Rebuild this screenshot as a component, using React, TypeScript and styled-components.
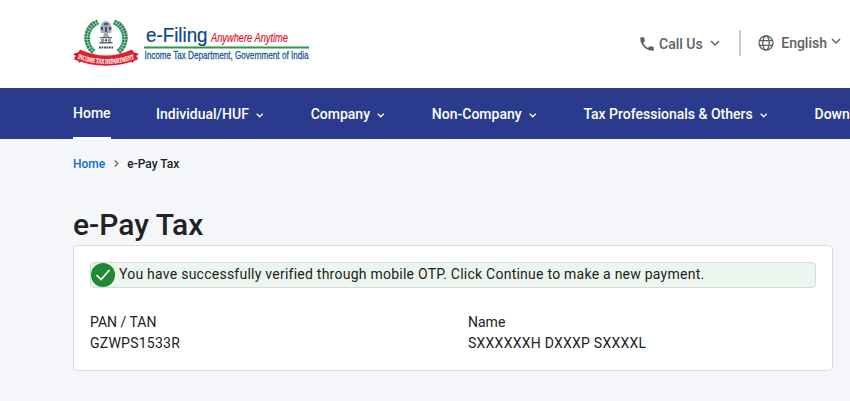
import React, {FC} from 'react'
import styled, { createGlobalStyle } from 'styled-components'

const menuItems = [
    'Individual/HUF',
    'Company',
    'Non-Company',
    'Tax Professionals & Others',
    'Downloads',
]

const Chevron:FC<{width: number, stroke: number}> = ({width, stroke}) => (
    <svg width={width} height={width * 0.6} viewBox="0 0 10 6" fill="none" stroke="currentColor" strokeWidth={stroke}>
        <path d="M1 1l4 4 4-4" />
    </svg>
)

const laurel = 'M25 4a17.500 17.500 0 0 0-4 30M41 4a17.500 17.500 0 0 1 4 30'

const Emblem:FC = () => (
    <svg width="66" height="50" viewBox="0 0 66 50">
        <path d="M20 3.500C9 11 9 28 20 36" fill="none" stroke="#e8505a" strokeWidth="1" />
        <path d="M46 3.500C57 11 57 28 46 36" fill="none" stroke="#e8505a" strokeWidth="1" />
        <path d={laurel} fill="none" stroke="#8fcdb0" strokeWidth="5" />
        <path d={laurel} fill="none" stroke="#188353" strokeWidth="5" strokeDasharray="1.900 .9" />
        <path d={laurel} fill="none" stroke="#c6e6d6" strokeWidth=".6" />
        <g fill="#5a6674">
            <path d="M29 5q4-4 8 0l2 5-1 5h-3l1 4h-6l1-4h-3l-1-5z" fill="#a3aab5" />
            <path d="M31 5h4v2h-4zM28 9h2v3h-2zM36 9h2v3h-2zM32 9h2v5h-2z" fill="#46536a" />
            <path d="M27 19h12v1.200H27zM26.500 24h13v1.400h-13z" />
            <path d="M28 20.500h3v3.500h-3zM35 20.500h3v3.500h-3z" fill="#929ba6" />
            <circle cx="33" cy="22.300" r="1.300" />
        </g>
        <path d="M26 29.500h14" stroke="#444" strokeWidth="1.800" strokeDasharray="1.800 .7" />
        <path d="M0 36l10-3 3 6-7 6-1-4-4-1 2-2zM66 36l-10-3-3 6 7 6 1-4 4-1-2-2z" fill="#b3141f" />
        <path d="M7 31.500Q33 43.500 59 31.500L65 41.500Q33 54 1 41.500Z" fill="#e21f2b" />
        <path id="ribbon" d="M4.500 40.500Q33 51 62 40.500" fill="none" />
        <text fontFamily="'Liberation Serif', serif" fontSize="7" fontWeight="700" fill="#fff" stroke="#fff" strokeWidth=".2">
            <textPath href="#ribbon" textLength="58" lengthAdjust="spacingAndGlyphs">INCOME TAX DEPARTMENT</textPath>
        </text>
    </svg>
)

const Wordmark:FC = () => (
    <svg width="168" height="42" viewBox="0 0 168 42" fontFamily="'Liberation Sans', sans-serif">
        <text x="3" y="19" fontSize="20" fill="#0d4583" stroke="#0d4583" strokeWidth=".2" textLength="61.500" lengthAdjust="spacingAndGlyphs">e-Filing</text>
        <text x="68" y="18.500" fontSize="12" fontStyle="italic" fill="#e30b2c" stroke="#e30b2c" strokeWidth=".15" textLength="77" lengthAdjust="spacingAndGlyphs">Anywhere Anytime</text>
        <path d="M1 24.500h165" stroke="#2c9a3f" strokeWidth="1.800" />
        <text x="1.500" y="36" fontSize="11" fill="#1d5b92" stroke="#1d5b92" strokeWidth=".3" textLength="164" lengthAdjust="spacingAndGlyphs">Income Tax Department, Government of India</text>
    </svg>
)

const App:FC = () => {
  return (
    <>
        <GlobalStyle />
        <TopBar>
            <Logo>
                <Emblem />
                <Wordmark />
            </Logo>
            <Tools>
                <Tool>
                    <svg width="18" height="18" viewBox="0 0 24 24" fill="currentColor">
                        <path d="M6.620 10.790a15.150 15.150 0 0 0 6.590 6.590l2.200-2.200a1 1 0 0 1 1.020-.24 11.400 11.400 0 0 0 3.570.57 1 1 0 0 1 1 1V20a1 1 0 0 1-1 1A17 17 0 0 1 3 4a1 1 0 0 1 1-1h3.500a1 1 0 0 1 1 1c0 1.250.2 2.450.57 3.570a1 1 0 0 1-.25 1.020z" />
                    </svg>
                    <ToolText>Call Us</ToolText>
                    <Chevron width={10} stroke={1.5} />
                </Tool>
                <Divider />
                <Language>
                    <svg width="16" height="16" viewBox="0 0 16 16" fill="none" stroke="currentColor" strokeWidth="1.300">
                        <circle cx="8" cy="8" r="7" />
                        <ellipse cx="8" cy="8" rx="3.200" ry="7" />
                        <path d="M1.500 5.600h13M1.500 10.400h13" />
                    </svg>
                    <ToolText>English</ToolText>
                    <Chevron width={10} stroke={1.5} />
                </Language>
            </Tools>
        </TopBar>
        <Menu>
            <ActiveItem>Home</ActiveItem>
            {menuItems.map((label) => (
                <MenuItem key={label}>
                    {label}
                    <Chevron width={7.5} stroke={1.8} />
                </MenuItem>
            ))}
        </Menu>
        <Content>
            <Breadcrumbs>
                <HomeLink href="#">Home</HomeLink>
                <svg width="5" height="8" viewBox="0 0 5 8" fill="none" stroke="#666" strokeWidth="1.200">
                    <path d="M.8 .5l3 3-3 3" />
                </svg>
                <span>e-Pay Tax</span>
            </Breadcrumbs>
            <Title>e-Pay Tax</Title>
            <Card>
                <Alert>
                    <svg width="24" height="24" viewBox="0 0 24 24" fill="none">
                        <circle cx="12" cy="12" r="12" fill="#218838" />
                        <path d="M5.500 12l4.500 4.500 8.500-9.500" stroke="#fff" strokeWidth="1.700" />
                    </svg>
                    <AlertText>You have successfully verified through mobile OTP. Click Continue to make a new payment.</AlertText>
                </Alert>
                <Details>
                    <div>
                        <Label>PAN / TAN</Label>
                        <div>GZWPS1533R</div>
                    </div>
                    <div>
                        <Label>Name</Label>
                        <div>SXXXXXXH DXXXP SXXXXL</div>
                    </div>
                </Details>
            </Card>
        </Content>
    </>
  )
}

const GlobalStyle = createGlobalStyle`
    * {
        box-sizing: border-box;
    }
    body {
        margin: 0;
        background: #f5f6fa;
        color: #212121;
        font-family: Roboto, sans-serif;
        font-size: 14px;
        overflow: hidden;
    }
    svg {
        flex: none;
        display: block;
        overflow: visible;
    }
`
const TopBar = styled.header`
    height: 88px;
    padding: 0 9px 0 73px;
    display: flex;
    justify-content: space-between;
    background: #fff;
`
const Logo = styled.div`
    display: flex;
    padding-top: 18px;
    gap: 4px;

    svg:last-child {
        margin-top: 5px;
    }
`
const Tools = styled.div`
    display: flex;
    align-items: center;
    height: 86px;
    color: #616161;
    font-weight: 500;
`
const Tool = styled.div`
    display: flex;
    align-items: center;
    padding-top: 2px;

    svg:last-child {
        margin-left: 7.5px;
        margin-top: -2px;
    }
`
const Language = styled(Tool)`
    padding-top: 0;

    svg:last-child {
        margin-left: 4px;
        margin-top: -4px;
    }
    span {
        margin-left: 7px;
    }
`
const ToolText = styled.span`
    margin-left: 3px;
    line-height: 20px;
`
const Divider = styled.div`
    width: 2px;
    height: 26px;
    margin: 0 17px 0 19px;
    background: #ccc;
`
const Menu = styled.nav`
    height: 51px;
    padding-left: 73px;
    display: flex;
    background: #2a3a8c;
    color: #fff;
    font-weight: 500;
    line-height: 20px;
    white-space: nowrap;
    overflow: hidden;
`
const ActiveItem = styled.div`
    padding-top: 15px;
    border-bottom: 2px solid #fff;
`
const MenuItem = styled.div`
    display: flex;
    flex: none;
    padding-top: 16px;
    margin-left: 45.5px;

    & + & {
        margin-left: 47.3px;
    }
    svg {
        margin: 9px 0 0 7px;
    }
`
const Content = styled.main`
    padding: 15px 17px 0 73px;
`
const Breadcrumbs = styled.div`
    display: flex;
    align-items: center;
    gap: 8.5px;
    font-size: 12px;
    font-weight: 500;
    line-height: 20px;
`
const HomeLink = styled.a`
    color: #0b6fd0;
    text-decoration: none;
`
const Title = styled.h1`
    margin: 31px 0 1px;
    font-size: 30px;
    font-weight: 500;
    line-height: 39px;
`
const Card = styled.section`
    height: 126px;
    padding: 16px;
    background: #fff;
    border: 1px solid #d8daea;
    border-radius: 4px;
    letter-spacing: .25px;
`
const Alert = styled.div`
    height: 26px;
    display: flex;
    align-items: center;
    gap: 4px;
    background: #edf6ee;
    border: 1px solid #d3dae2;
    border-radius: 4px;
`
const AlertText = styled.span`
    line-height: 20px;
    padding-bottom: 2px;
    letter-spacing: .245px;
`
const Details = styled.div`
    display: grid;
    grid-template-columns: 378px 1fr;
    padding-top: 24px;
    line-height: 21px;
`
const Label = styled.div`
    letter-spacing: 0;
`

export default App
